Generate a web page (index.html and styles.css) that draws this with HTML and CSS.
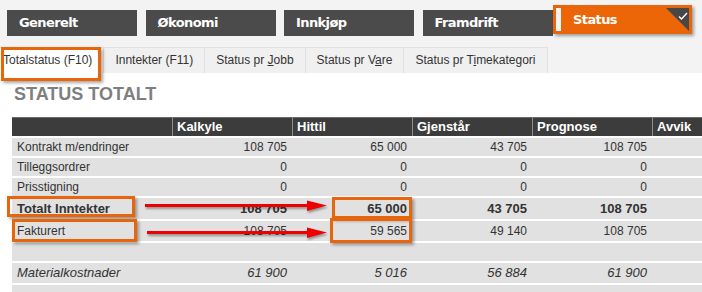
FILE: index.html
```html
<!DOCTYPE html>
<html>
<head>
    <title>Status totalt</title>
    <link rel="stylesheet" href="styles.css">
</head>
<body>
    <div class="topbar">
        <!-- main tabs -->
        <nav class="maintabs">
            <a class="maintab">Generelt</a>
            <a class="maintab">Økonomi</a>
            <a class="maintab">Innkjøp</a>
            <a class="maintab">Framdrift</a>
            <a class="maintab active">Status<span class="corner"><svg width="10" height="8" viewBox="0 0 10 8"><path d="M1 4.5 L3.5 7 L9 1" fill="none" stroke="#fff" stroke-width="1.3"/></svg></span></a>
        </nav>
        <!-- sub tabs -->
        <nav class="subtabs">
            <a class="subtab active">Totalstatus (F10)</a>
            <a class="subtab">Inntekter (F11)</a>
            <a class="subtab">Status pr <u>J</u>obb</a>
            <a class="subtab">Status pr V<u>a</u>re</a>
            <a class="subtab">Status pr T<u>i</u>mekategori</a>
        </nav>
    </div>

    <div class="content">
        <h1>STATUS TOTALT</h1>
        <table class="status">
            <colgroup>
                <col class="c-label">
                <col class="c-num"><col class="c-num"><col class="c-num"><col class="c-num"><col class="c-num">
            </colgroup>
            <thead>
                <tr>
                    <th></th>
                    <th>Kalkyle</th>
                    <th>Hittil</th>
                    <th>Gjenstår</th>
                    <th>Prognose</th>
                    <th>Avvik</th>
                </tr>
            </thead>
            <tbody>
                <tr>
                    <td>Kontrakt m/endringer</td>
                    <td>108 705</td><td>65 000</td><td>43 705</td><td>108 705</td><td></td>
                </tr>
                <tr>
                    <td>Tilleggsordrer</td>
                    <td>0</td><td>0</td><td>0</td><td>0</td><td></td>
                </tr>
                <tr>
                    <td>Prisstigning</td>
                    <td>0</td><td>0</td><td>0</td><td>0</td><td></td>
                </tr>
                <tr class="total">
                    <td>Totalt Inntekter</td>
                    <td>108 705</td><td>65 000</td><td>43 705</td><td>108 705</td><td></td>
                </tr>
                <tr class="invoiced">
                    <td>Fakturert</td>
                    <td>108 705</td><td>59 565</td><td>49 140</td><td>108 705</td><td></td>
                </tr>
                <tr>
                    <td></td><td></td><td></td><td></td><td></td><td></td>
                </tr>
                <tr class="cost">
                    <td>Materialkostnader</td>
                    <td>61 900</td><td>5 016</td><td>56 884</td><td>61 900</td><td></td>
                </tr>
                <tr>
                    <td></td><td></td><td></td><td></td><td></td><td></td>
                </tr>
            </tbody>
        </table>
    </div>

    <!-- annotations drawn over the screenshot -->
    <div class="mark mark-status"></div>
    <div class="mark mark-subtab"></div>
    <div class="mark mark-total"></div>
    <div class="mark mark-invoiced"></div>
    <div class="mark mark-total-val"></div>
    <div class="mark mark-invoiced-val"></div>
    <svg class="arrows" width="702" height="292" viewBox="0 0 702 292">
        <g fill="#f00000" stroke="none">
            <rect x="145" y="204" width="165" height="3"/>
            <polygon points="307,200.5 327,205.5 307,211"/>
            <rect x="147" y="231" width="163" height="3"/>
            <polygon points="307,227.5 327,232.5 307,238"/>
        </g>
    </svg>
</body>
</html>
```

FILE: styles.css
```css
html, body {
    margin: 0;
    overflow: hidden;
}
body {
    background-color: #fff;
    font-family: "Liberation Sans", Arial, sans-serif;
    color: #333;
    position: relative;
    height: 292px;
}
.topbar {
    background-color: #f3f3f3;
    padding-top: 10px;
}
.maintabs {
    display: flex;
    gap: 8.5px;
    padding-left: 7px;
    height: 26px;
}
.maintab {
    box-sizing: border-box;
    width: 130px;
    height: 26px;
    line-height: 26px;
    padding-left: 12px;
    background-color: #4b4b4b;
    color: #fff;
    font-family: "DejaVu Sans", Tahoma, sans-serif;
    font-weight: bold;
    font-size: 13px;
    letter-spacing: -0.6px;
}
.maintab.active {
    position: relative;
    margin-top: -2px;
    height: 23px;
    line-height: 23px;
    background-color: #ec6608;
}
.corner {
    position: absolute;
    top: 0;
    right: 2px;
    width: 0;
    height: 0;
    border-top: 23px solid #474747;
    border-left: 23px solid transparent;
}
.corner svg {
    position: absolute;
    top: -19px;
    right: 1px;
}
.subtabs {
    display: flex;
    margin-top: 11px;
    height: 26px;
}
.subtab {
    box-sizing: border-box;
    height: 26px;
    line-height: 25px;
    padding: 0 11px;
    margin-right: -1px;
    border: 1px solid #e0e0e0;
    border-bottom: none;
    background-color: #f0f0f0;
    font-size: 12px;
    color: #333;
}
.subtab.active {
    background-color: #fff;
    padding-left: 3px;
    border-left: none;
}
.content {
    padding: 10px 0 0 12px;
}
h1 {
    margin: 0 0 12px 2px;
    font-size: 18px;
    line-height: 22px;
    color: #7f7f7f;
}
.status {
    table-layout: fixed;
    width: 760px;
    border-collapse: separate;
    border-spacing: 0;
}
.c-label {
    width: 160px;
}
.c-num {
    width: 120px;
}
.status th {
    height: 18px;
    padding: 0 0 0 4px;
    background-color: #3c3c3c;
    color: #fff;
    font-size: 13px;
    font-weight: bold;
    text-align: left;
    line-height: 18px;
    border-left: 1px solid #8d8d8d;
    border-top: 1px solid #6a6a6a;
}
.status th:first-child {
    border-left: none;
}
.status td {
    padding: 0 5px 0 0;
    background-color: #e1e1e1;
    border-top: 2px solid #fff;
    font-size: 12px;
    line-height: 18px;
    height: 18px;
    text-align: right;
    white-space: nowrap;
}
.status td:first-child {
    padding-left: 5px;
    text-align: left;
}
.status .total td {
    font-size: 13px;
    font-weight: bold;
    line-height: 21px;
    height: 21px;
}
.status .invoiced td {
    line-height: 20px;
    height: 20px;
}
.status .cost td {
    font-size: 13px;
    font-style: italic;
    line-height: 20px;
    height: 20px;
}
.mark {
    position: absolute;
    box-sizing: border-box;
    border: 3px solid #e8650c;
    box-shadow: 2px 2px 3px rgba(0, 0, 0, 0.35);
}
.mark-status {
    left: 553px;
    top: 5px;
    width: 139px;
    height: 29px;
}
.mark-subtab {
    left: 1px;
    top: 47px;
    width: 100px;
    height: 34px;
}
.mark-total {
    left: 7px;
    top: 196px;
    width: 128px;
    height: 21px;
}
.mark-invoiced {
    left: 12px;
    top: 219px;
    width: 125px;
    height: 23px;
}
.mark-total-val {
    left: 332px;
    top: 197px;
    width: 80px;
    height: 22px;
}
.mark-invoiced-val {
    left: 330px;
    top: 218px;
    width: 82px;
    height: 25px;
}
.arrows {
    position: absolute;
    left: 0;
    top: 0;
    filter: drop-shadow(1px 2px 1px rgba(0, 0, 0, 0.35));
}
```
